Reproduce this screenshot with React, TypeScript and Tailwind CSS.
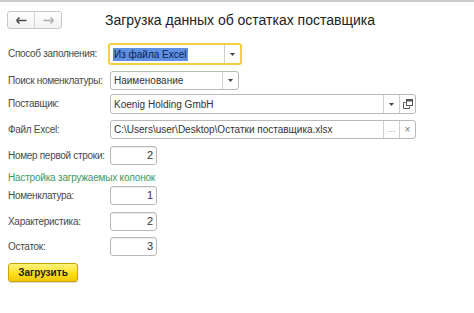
import React from "react";

const Tri = () => (
  <svg width="5" height="3" viewBox="0 0 5 3"><path d="M0 0 L5 0 L2.5 3 Z" fill="#444" /></svg>
);

const Label = ({ children }: { children: React.ReactNode }) => (
  <div className="w-[102px] shrink-0 text-[10px] tracking-[-0.3px] text-[#4a4a4a] leading-none whitespace-nowrap">{children}</div>
);

const NumBox = ({ v }: { v: string }) => (
  <div className="w-[47px] h-[19px] border border-[#b9b9b9] rounded-[3px] flex items-center justify-end pr-[3px] text-[11px] text-[#333] shadow-[inset_0_1px_1px_rgba(0,0,0,0.08)]">{v}</div>
);

export default function App() {
  return (
    <div className="w-[474px] h-[313px] bg-white overflow-hidden flex flex-col" style={{ fontFamily: '"Liberation Sans", Arial, sans-serif' }}>
      <div className="h-[2px] bg-[#cdcdcd] shrink-0" />
      <div className="flex items-center mt-[9px] h-[18px] shrink-0">
        <div className="ml-[7px] w-[55px] h-[18px] border border-[#c8c8c8] rounded-[3px] flex bg-gradient-to-b from-white to-[#f2f2f2]">
          <div className="w-[27px] flex items-center justify-center border-r border-[#d4d4d4]">
            <svg width="11" height="7" viewBox="0 0 11 7"><path d="M0.5 3.5 H10.5 M0.5 3.5 L3.5 0.5 M0.5 3.5 L3.5 6.5" stroke="#4a4a4a" strokeWidth="1.5" fill="none" /></svg>
          </div>
          <div className="flex-1 flex items-center justify-center">
            <svg width="11" height="7" viewBox="0 0 11 7"><path d="M0.5 3.5 H10.5 M10.5 3.5 L7.5 0.5 M10.5 3.5 L7.5 6.5" stroke="#aaaaaa" strokeWidth="1.3" fill="none" /></svg>
          </div>
        </div>
        <div className="ml-[43px] text-[14px] text-[#222] leading-none">Загрузка данных об остатках поставщика</div>
      </div>

      <div className="flex flex-col pl-[8px] mt-[14px]">
        <div className="flex items-center h-[22px]">
          <Label>Способ заполнения:</Label>
          <div className="-ml-[2px] w-[134px] h-[22px] border-2 border-[#f2d03b] rounded-[3px] flex">
            <div className="flex-1 flex items-center pl-[3px]">
              <span className="bg-[#5e8fe0] text-[#0e1f55] text-[10px] leading-[13px] px-[1px]">Из файла Excel</span>
            </div>
            <div className="w-[16px] border-l border-[#cfcfcf] flex items-center justify-center"><Tri /></div>
          </div>
        </div>

        <div className="flex items-center h-[19px] mt-[6px]">
          <Label>Поиск номенклатуры:</Label>
          <div className="w-[129px] h-[19px] border border-[#b9b9b9] rounded-[3px] flex">
            <div className="flex-1 flex items-center pl-[3px] text-[10px] text-[#333]">Наименование</div>
            <div className="w-[16px] border-l border-[#cfcfcf] flex items-center justify-center"><Tri /></div>
          </div>
        </div>

        <div className="flex items-center h-[20px] mt-[4px]">
          <Label>Поставщик:</Label>
          <div className="w-[306px] h-[20px] border border-[#b9b9b9] rounded-[3px] flex">
            <div className="flex-1 flex items-center pl-[3px] text-[10px] text-[#333]">Koenig Holding GmbH</div>
            <div className="w-[16px] border-l border-[#cfcfcf] flex items-center justify-center"><Tri /></div>
            <div className="w-[16px] border-l border-[#cfcfcf] flex items-center justify-center">
              <svg width="10" height="10" viewBox="0 0 10 10"><rect x="3.5" y="0.5" width="6" height="6" fill="none" stroke="#555" /><rect x="4" y="1" width="5" height="1.5" fill="#555" /><path d="M2.5 3.5 H0.5 V9.5 H6.5 V7.5" fill="none" stroke="#555" /></svg>
            </div>
          </div>
        </div>

        <div className="flex items-center h-[19px] mt-[6px]">
          <Label>Файл Excel:</Label>
          <div className="w-[306px] h-[19px] border border-[#b9b9b9] rounded-[3px] flex">
            <div className="flex-1 flex items-center pl-[3px] text-[10px] text-[#333]">C:\Users\user\Desktop\Остатки поставщика.xlsx</div>
            <div className="w-[16px] border-l border-[#cfcfcf] flex items-end justify-center pb-[4px] text-[9px] text-[#999] leading-none">...</div>
            <div className="w-[16px] border-l border-[#cfcfcf] flex items-center justify-center text-[10px] text-[#777] leading-none">×</div>
          </div>
        </div>

        <div className="flex items-center h-[19px] mt-[7px]">
          <Label>Номер первой строки:</Label>
          <NumBox v="2" />
        </div>

        <div className="text-[10px] text-[#3c9a5f] leading-[10px] mt-[8px] tracking-[-0.2px]">Настройка загружаемых колонок</div>

        <div className="flex items-center h-[19px] mt-[3px]">
          <Label>Номенклатура:</Label>
          <NumBox v="1" />
        </div>
        <div className="flex items-center h-[19px] mt-[7px]">
          <Label>Характеристика:</Label>
          <NumBox v="2" />
        </div>
        <div className="flex items-center h-[19px] mt-[6px]">
          <Label>Остаток:</Label>
          <NumBox v="3" />
        </div>

        <div className="mt-[7px] w-[70px] h-[19px] rounded-[3px] border border-[#c9a400] bg-gradient-to-b from-[#fff27a] via-[#ffe21f] to-[#f0c800] flex items-center justify-center text-[10px] font-bold text-[#222] shadow-[0_1px_1px_rgba(0,0,0,0.15)]">Загрузить</div>
      </div>
    </div>
  );
}
